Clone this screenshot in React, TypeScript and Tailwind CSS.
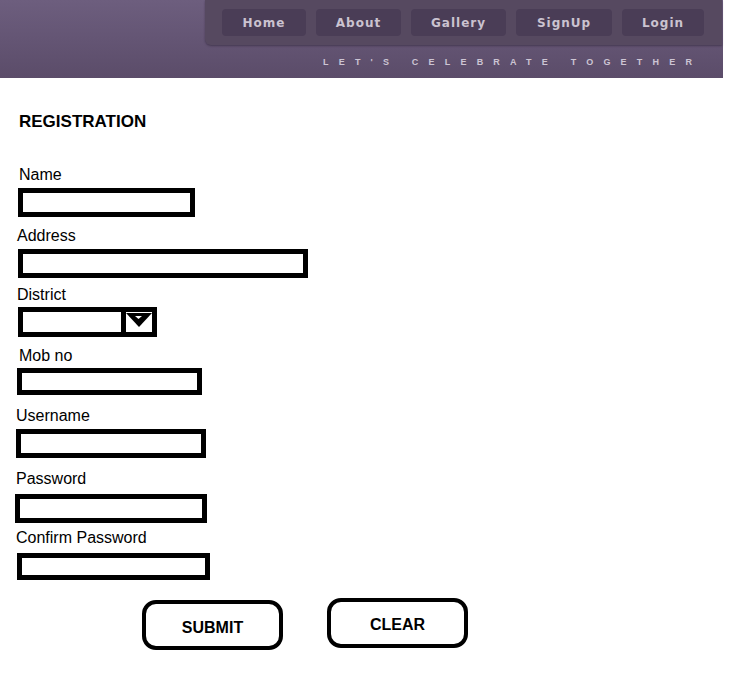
import React from 'react'

const navItems = [
  { label: 'Home', w: 'w-[84px]' },
  { label: 'About', w: 'w-[85px]' },
  { label: 'Gallery', w: 'w-[95px]' },
  { label: 'SignUp', w: 'w-[96px]' },
  { label: 'Login', w: 'w-[82px]' },
]

function Header() {
  return (
    <div className="w-[723px] h-[78px] bg-gradient-to-b from-[#6d5e7e] via-[#645574] to-[#5b4c69] flex flex-col">
      <div className="ml-[205px] w-[517px] h-[45px] bg-[#564960] rounded-bl-[6px] shadow-[0_1px_2px_rgba(40,30,50,0.5)] flex gap-[10px] pl-[17px] pt-[9px]">
        {navItems.map(item => (
          <div
            key={item.label}
            className={`${item.w} h-[27px] rounded-[4px] bg-[#4a3d56] flex items-center justify-center text-[12px] font-bold tracking-[1px] text-[#cbc3d0] font-['DejaVu_Sans',sans-serif]`}
          >
            {item.label}
          </div>
        ))}
      </div>
      <div className="ml-[323px] mt-[12px] text-[9px] leading-[10px] font-bold tracking-[10.2px] text-[#cdc5d4] font-['Liberation_Sans',sans-serif] whitespace-nowrap">
        LET'S CELEBRATE TOGETHER
      </div>
    </div>
  )
}

function Label({ text, className }: { text: string; className: string }) {
  return <div className={`text-[16px] leading-[20px] text-black ${className}`}>{text}</div>
}

function Box({ className }: { className: string }) {
  return <div className={`border-[5px] border-black bg-white ${className}`} />
}

export default function App() {
  return (
    <div className="min-h-screen w-full bg-white font-['Liberation_Sans',Arial,sans-serif]">
      <Header />
      <div className="flex flex-col items-start">
        <h1 className="ml-[19px] mt-[34px] text-[17px] leading-[20px] font-bold text-black">REGISTRATION</h1>

        <Label text="Name" className="ml-[19px] mt-[33px]" />
        <Box className="ml-[18px] mt-[3px] w-[177px] h-[29px]" />

        <Label text="Address" className="ml-[17px] mt-[9px]" />
        <Box className="ml-[18px] mt-[3px] w-[290px] h-[29px]" />

        <Label text="District" className="ml-[17px] mt-[7px]" />
        <div className="ml-[18px] mt-[2px] w-[139px] h-[30px] border-[5px] border-black bg-white flex">
          <div className="w-[100px] h-full" />
          <div className="w-[5px] h-full bg-black" />
          <div className="flex-1 flex justify-center items-start pt-[1px]">
            <svg width="26" height="15" viewBox="0 0 26 15">
              <polygon points="0,0 26,0 13,14" fill="#000" />
              <polygon points="9,3 16,3 12.5,6" fill="#fff" />
            </svg>
          </div>
        </div>

        <Label text="Mob no" className="ml-[19px] mt-[9px]" />
        <Box className="ml-[17px] mt-[2px] w-[185px] h-[27px]" />

        <Label text="Username" className="ml-[16px] mt-[11px]" />
        <Box className="ml-[16px] mt-[3px] w-[190px] h-[29px]" />

        <Label text="Password" className="ml-[16px] mt-[11px]" />
        <Box className="ml-[15px] mt-[5px] w-[192px] h-[29px]" />

        <Label text="Confirm Password" className="ml-[16px] mt-[5px]" />
        <Box className="ml-[17px] mt-[5px] w-[193px] h-[27px]" />

        <div className="mt-[18px] flex items-start gap-[44px] ml-[142px]">
          <button className="mt-[2px] w-[141px] h-[50px] border-[4px] border-black rounded-[14px] bg-white flex items-center justify-center pt-[6px] text-[16px] font-bold text-black">
            SUBMIT
          </button>
          <button className="w-[141px] h-[50px] border-[4px] border-black rounded-[14px] bg-white flex items-center justify-center pt-[4px] text-[16px] font-bold text-black">
            CLEAR
          </button>
        </div>
      </div>
    </div>
  )
}
